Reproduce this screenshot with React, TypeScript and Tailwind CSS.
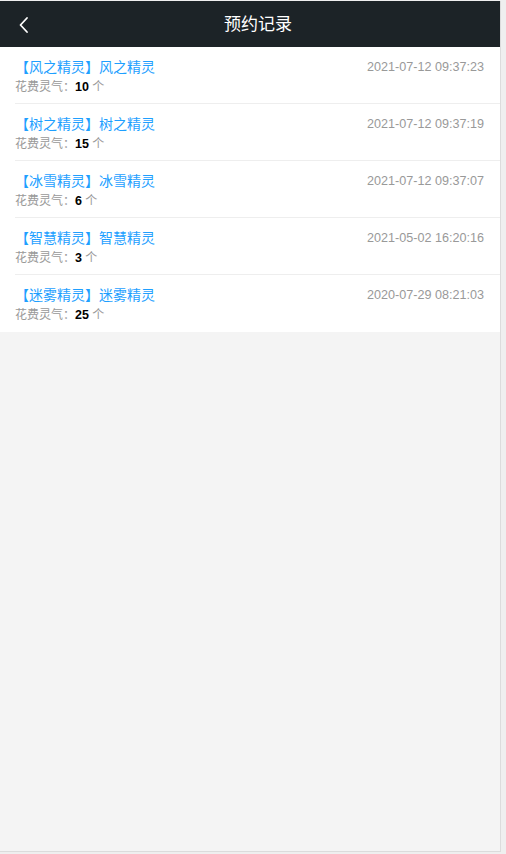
import React from "react";

const records = [
  { name: "【风之精灵】风之精灵", time: "2021-07-12 09:37:23", cost: 10 },
  { name: "【树之精灵】树之精灵", time: "2021-07-12 09:37:19", cost: 15 },
  { name: "【冰雪精灵】冰雪精灵", time: "2021-07-12 09:37:07", cost: 6 },
  { name: "【智慧精灵】智慧精灵", time: "2021-05-02 16:20:16", cost: 3 },
  { name: "【迷雾精灵】迷雾精灵", time: "2020-07-29 08:21:03", cost: 25 },
];

export default function App() {
  return (
    <div
      className="w-[506px] h-[854px] bg-[#efefef] pt-px"
      style={{ fontFamily: '"Liberation Sans", "Noto Sans CJK SC", sans-serif' }}
    >
      <div className="w-[501px] h-[851px] bg-[#f4f4f4] border-r border-b border-[#dcdcdc] flex flex-col">
        {/* header */}
        <div className="h-[46px] bg-[#1c2327] flex items-center relative shrink-0">
          <button className="absolute left-[14px] top-[14px] w-5 h-5 flex items-center justify-center">
            <svg width="12" height="18" viewBox="0 0 12 18" fill="none">
              <path d="M9 2L2.5 9L9 16" stroke="#fff" strokeWidth="1.8" strokeLinecap="round" strokeLinejoin="round" />
            </svg>
          </button>
          <h1 className="flex-1 text-center text-white text-[17px] leading-[46px] pl-[16px] pt-[2px]">预约记录</h1>
        </div>

        {/* list */}
        <div className="bg-white">
          {records.map((r, i) => (
            <div key={i} className="pl-[15px]">
              <div className={"h-[57px] pr-[16px] pt-[11px] " + (i < records.length - 1 ? "border-b border-[#eeeeee]" : "")}>
                <div className="flex justify-between items-center h-[19px]">
                  <span className="text-[14px] text-[#1e9fff] leading-[19px]">{r.name}</span>
                  <span className="text-[12.6px] text-[#999999] leading-[19px]">{r.time}</span>
                </div>
                <div className="text-[12px] text-[#999999] leading-[18px] mt-px">
                  花费灵气：<b className="text-black font-bold text-[12.5px]">{r.cost}</b> 个
                </div>
              </div>
            </div>
          ))}
        </div>
      </div>
    </div>
  );
}
